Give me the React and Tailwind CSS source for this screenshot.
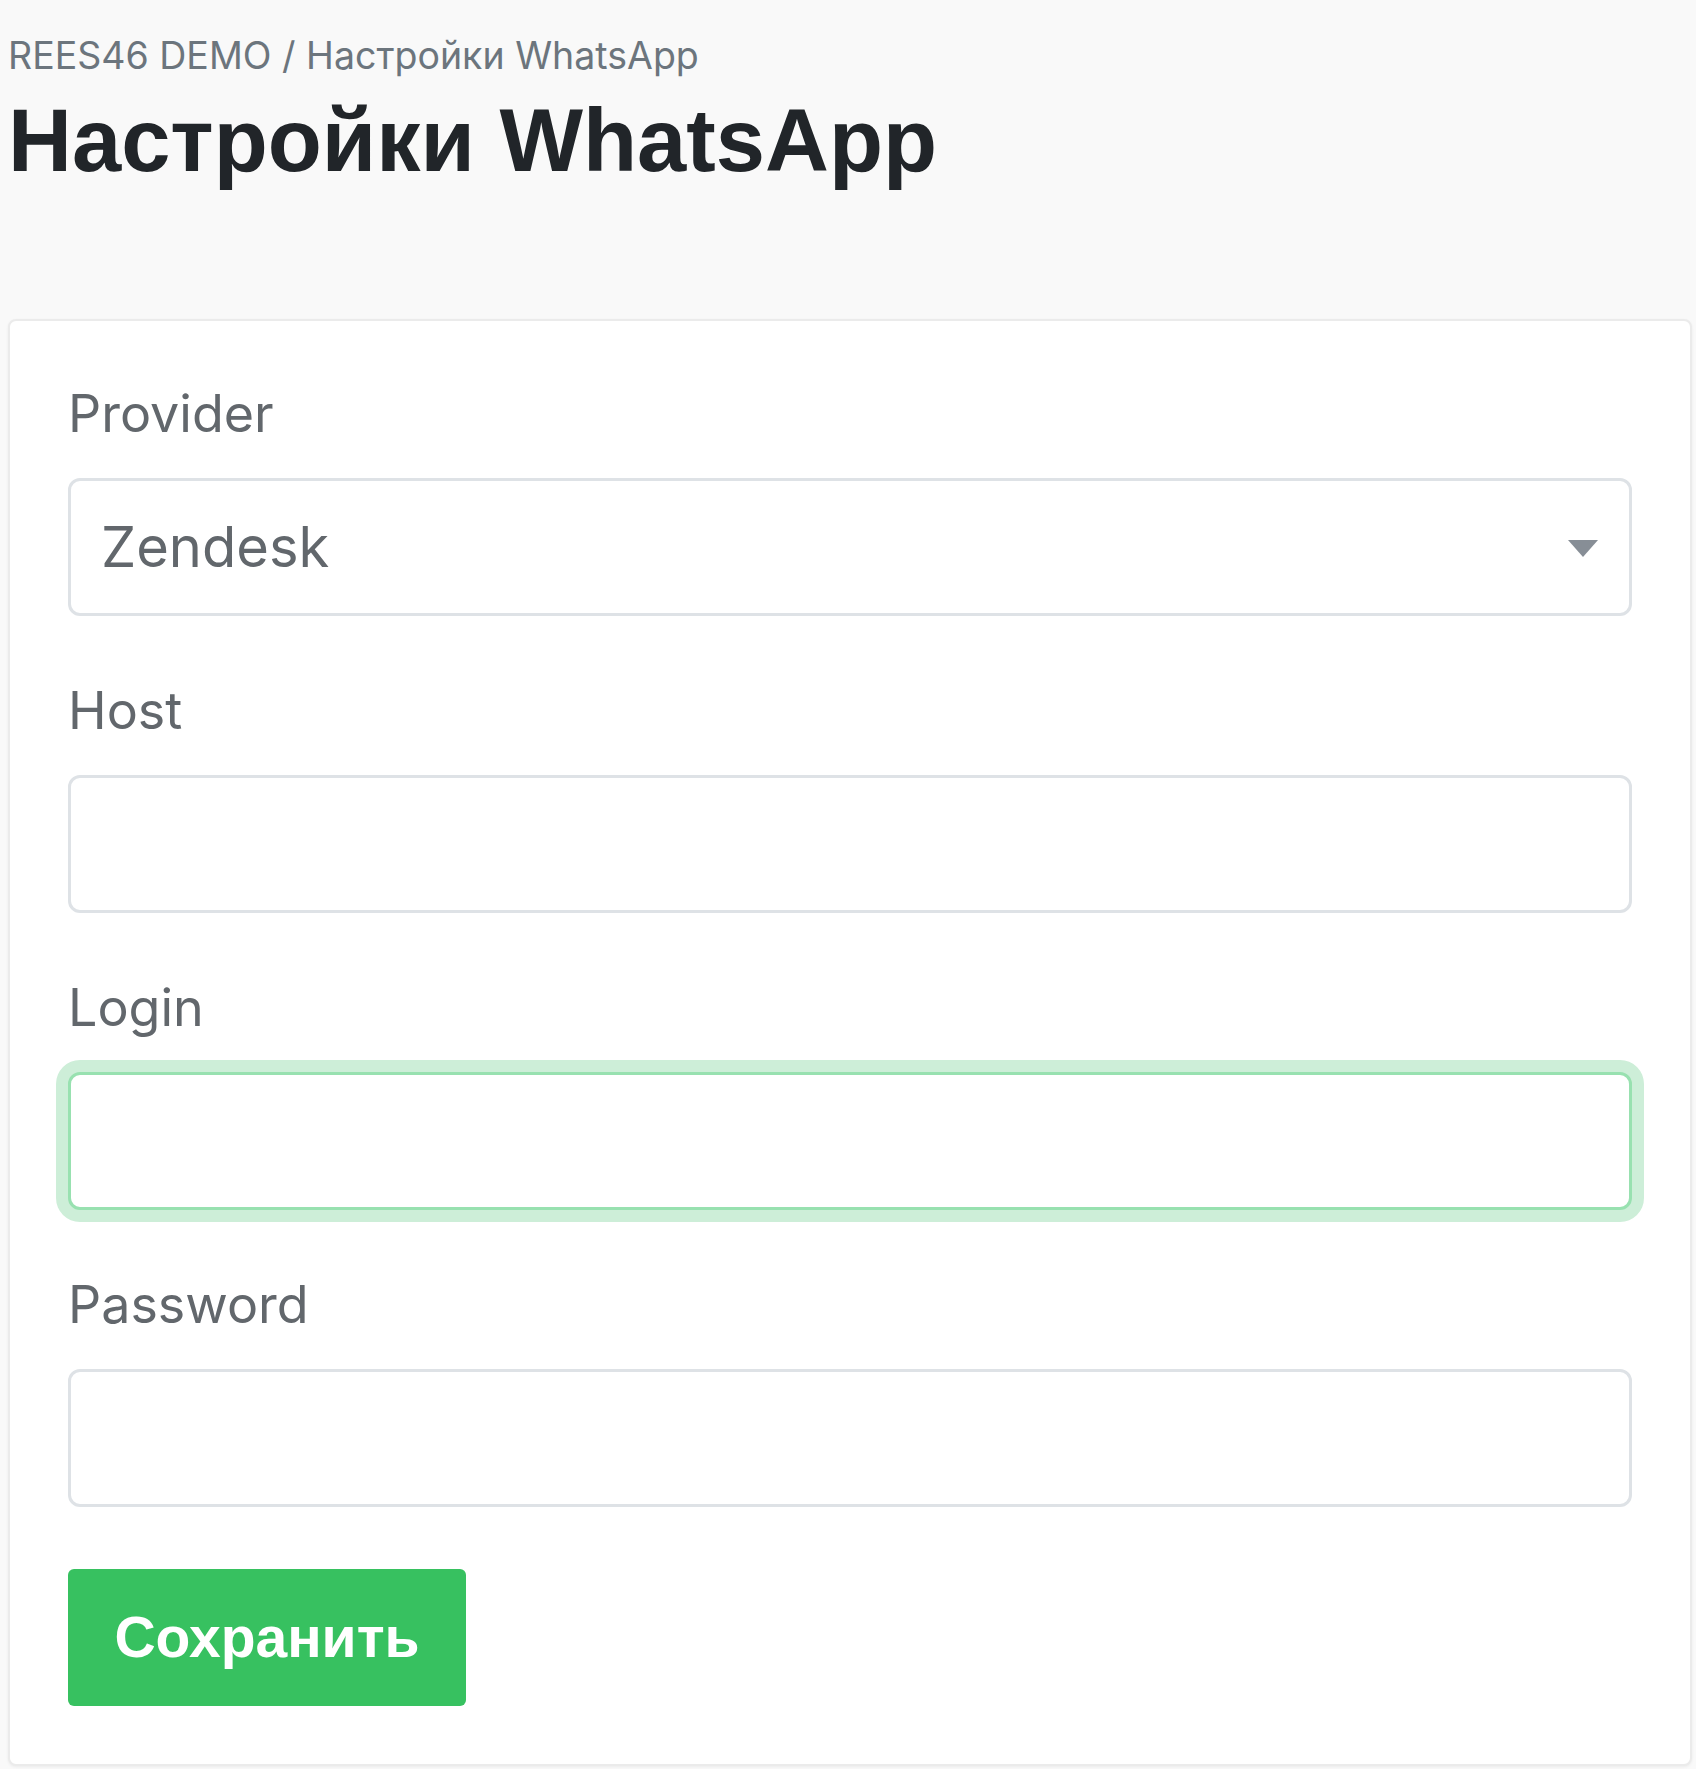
import { useState } from 'react'

function Field({ label, children }) {
  return (
    <div className="flex flex-col">
      <label className="text-[52px] leading-[78px] text-[#62676c]">{label}</label>
      <div className="mt-[25px]">{children}</div>
    </div>
  )
}

function TextInput({ focused = false }) {
  return (
    <input
      type="text"
      className={`block w-full h-[138px] rounded-[12px] border-[3px] bg-white px-[30px] text-[56px] text-[#62676c] outline-none ${
        focused ? 'border-[#98e1b0] ring-[12px] ring-[#cdeed8]' : 'border-[#dee2e6]'
      }`}
    />
  )
}

export default function App() {
  const [provider, setProvider] = useState('zendesk')

  return (
    <div className="min-h-[1769px] bg-[#f9f9f9] pl-[8px] pr-[4px] pt-[28px] font-['Inter','Noto_Sans',sans-serif]">
      <div className="text-[37.5px] leading-[56px] text-[#6c757d]">REES46 DEMO / Настройки WhatsApp</div>
      <h1 className="font-['Liberation_Sans','Arial',sans-serif] text-[88.5px] font-bold leading-[114px] text-[#212529]">
        Настройки WhatsApp
      </h1>

      <div className="mt-[121px] rounded-[8px] border-2 border-[#ebebeb] bg-white px-[58px] pt-[54px] pb-[58px] shadow-[0_1px_3px_rgba(0,0,0,0.06)]">
        <div className="flex flex-col gap-[56px]">
          <Field label="Provider">
            <div className="relative">
              <select
                value={provider}
                onChange={e => setProvider(e.target.value)}
                className="block w-full h-[138px] appearance-none rounded-[12px] border-[3px] border-[#dee2e6] bg-white pl-[30px] pr-[90px] text-[56px] text-[#62676c] outline-none"
              >
                <option value="zendesk">Zendesk</option>
              </select>
              <svg className="pointer-events-none absolute right-[34px] top-[62px] h-[17px] w-[30px]" viewBox="0 0 30 17">
                <path d="M0 0 H30 L15 17 Z" fill="#878e96" />
              </svg>
            </div>
          </Field>
          <Field label="Host">
            <TextInput />
          </Field>
          <Field label="Login">
            <TextInput focused />
          </Field>
          <Field label="Password">
            <TextInput />
          </Field>
        </div>

        <button className="mt-[62px] h-[137px] w-[398px] rounded-[6px] bg-[#37c160] font-['Liberation_Sans','Arial',sans-serif] text-[57px] font-bold text-white">
          Сохранить
        </button>
      </div>
    </div>
  )
}
